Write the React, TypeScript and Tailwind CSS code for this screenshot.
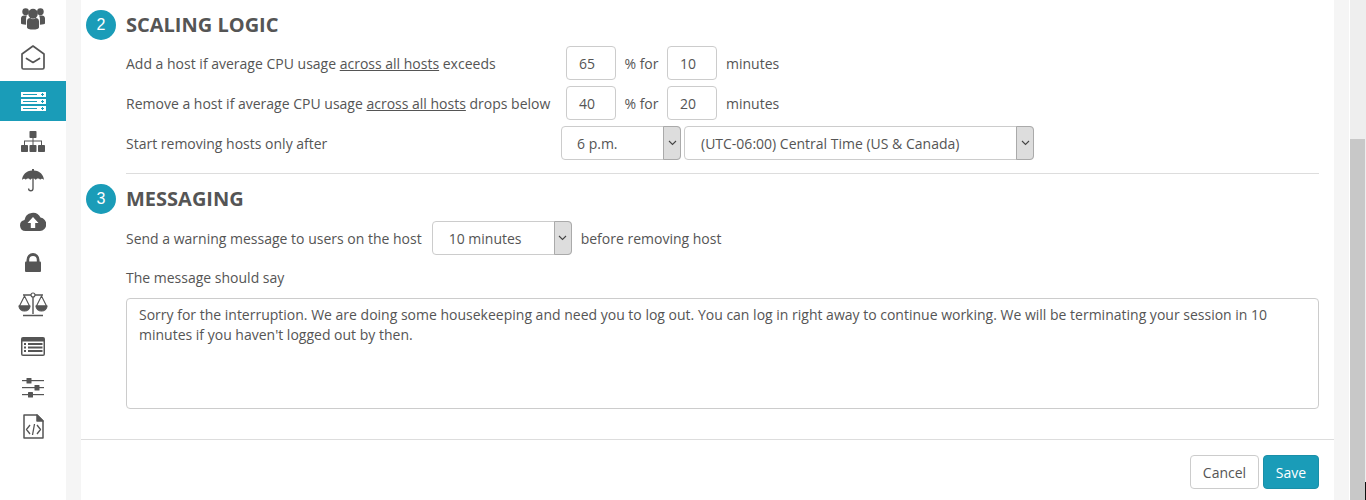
import React from "react";

const D = "#555555";

const Users = () => (
  <svg width="24" height="23" viewBox="0 0 26 24" preserveAspectRatio="none" fill={D}>
    <circle cx="5" cy="5" r="3.600" /><circle cx="21" cy="5" r="3.600" />
    <path d="M0 17v-5c0-2 1.500-3.200 3.500-3.200H6.500C5.800 10 5.500 11 5.500 12.500V18.500C2.500 18.500 0 18 0 17ZM26 17v-5c0-2-1.500-3.200-3.500-3.200H19.500C20.200 10 20.500 11 20.500 12.500V18.500C23.500 18.500 26 18 26 17Z" />
    <circle cx="13" cy="7" r="5.200" />
    <path d="M6.500 21v-6c0-2.500 1.800-3.500 3.500-3.500 1 .8 2 1.200 3 1.200s2-.4 3-1.200c1.700 0 3.500 1 3.500 3.500v6c0 1.500-3 2.500-6.500 2.500S6.500 22.500 6.500 21Z" />
  </svg>
);
const EnvelopeOpen = () => (
  <svg width="24" height="25" viewBox="0 0 24 25" fill="none" stroke={D} strokeWidth="1.700" strokeLinejoin="round" strokeLinecap="round">
    <path d="M1 9 12 1l11 8v13.500a1.500 1.500 0 0 1-1.500 1.500H2.500A1.500 1.500 0 0 1 1 22.500Z" />
    <path d="M5.500 13.500 12 17.500l6.500-4" />
  </svg>
);
const Server = () => (
  <svg width="25" height="19" viewBox="0 0 25 19">
    {[0, 7, 14].map((y) => (
      <g key={y}>
        <rect x="0" y={y} width="25" height="5" fill="#fff" />
        <rect x="2" y={y + 2} width="14" height="1" fill="#1a9cb8" />
        <rect x="20" y={y + 2} width="3" height="1" fill="#1a9cb8" />
        <rect x="21" y={y + 1} width="1" height="3" fill="#1a9cb8" />
      </g>
    ))}
  </svg>
);
const Sitemap = () => (
  <svg width="24" height="21" viewBox="0 0 24 21" fill={D}>
    <rect x="8.500" y="0" width="7" height="7" rx=".8" />
    <rect x="0" y="14" width="7" height="7" rx=".8" /><rect x="8.500" y="14" width="7" height="7" rx=".8" /><rect x="17" y="14" width="7" height="7" rx=".8" />
    <path d="M11.500 7h1v2.500h8.500V14h-1v-3.500h-7.500V14h-1v-3.500H4V14H3V9.500h8.500Z" />
  </svg>
);
const Umbrella = () => (
  <svg width="22" height="23" viewBox="0 0 23 23" preserveAspectRatio="none" fill={D}>
    <path d="M10.500 0h2v1.500c6 .3 10 4.200 10.500 9.500-1.200-1.500-3-1.800-4-.2-1-1.600-3.500-1.600-4.500.1-.8-1-2-1.400-3-1.400s-2.200.4-3 1.400c-1-1.700-3.500-1.700-4.500-.1-1-1.600-2.800-1.300-4 .2C.5 5.700 4.500 1.800 10.500 1.500Z" />
    <path d="M10.800 9h1.400v10.500a3 3 0 0 1-6 0h1.400a1.600 1.600 0 0 0 3.200 0Z" />
  </svg>
);
const Cloud = () => (
  <svg width="26" height="20" viewBox="0 0 26 20">
    <path d="M5.500 20a5.500 5.500 0 0 1-1-10.900A8.500 8.500 0 0 1 20.500 6.500 6.800 6.800 0 0 1 20 20Z" fill={D} />
    <path d="M13 6 18.500 12H15.200v5h-4.400v-5H7.500Z" fill="#fff" />
  </svg>
);
const Lock = () => (
  <svg width="16" height="19" viewBox="0 0 16 19" fill={D}>
    <path d="M1.500 9V7a6.500 7 0 0 1 13 0v2h-2.700V7a3.800 4 0 0 0-7.600 0v2Z" />
    <rect x="0" y="8.500" width="16" height="10.500" rx="1" />
  </svg>
);
const Scales = () => (
  <svg width="30" height="25" viewBox="0 0 30 25" fill="none" stroke={D} strokeWidth="1.100">
    <path d="M5 3h20M15 3v19M5 23.500h20" strokeWidth="1.400" />
    <circle cx="15" cy="3" r="2" fill="#fff" />
    <path d="M6.500 4 1.500 14h10ZM23.500 4l-5 10h10Z" />
    <path d="M1 14h11a5.500 5 0 0 1-11 0ZM18 14h11a5.500 5 0 0 1-11 0Z" fill={D} />
  </svg>
);
const ListAlt = () => (
  <svg width="24" height="19" viewBox="0 0 24 19">
    <rect x="0" y="0" width="24" height="19" rx="2" fill={D} />
    <rect x="1.500" y="4.500" width="21" height="13" fill="#fff" />
    {[6, 9.500, 13].map((y) => (
      <g key={y} fill={D}>
        <rect x="3" y={y} width="2" height="2" /><rect x="7" y={y} width="14.500" height="2" />
      </g>
    ))}
  </svg>
);
const Sliders = () => (
  <svg width="22" height="20" viewBox="0 0 22 20" fill={D}>
    <rect x="0" y="2" width="22" height="1.200" /><rect x="0" y="9" width="22" height="1.200" /><rect x="0" y="16" width="22" height="1.200" />
    <rect x="4.500" y="0" width="5" height="5.500" rx=".6" /><rect x="12.500" y="7" width="5" height="5.500" rx=".6" /><rect x="6" y="14" width="5" height="5.500" rx=".6" />
  </svg>
);
const FileCode = () => (
  <svg width="21" height="25" viewBox="0 0 21 25" fill="none" stroke={D} strokeWidth="1.500" strokeLinejoin="round">
    <path d="M1 1h13l6 6v17H1Z" />
    <path d="M14 1v6h6Z" fill={D} />
    <path d="M7 11 3.500 15.500 7 20M14 11l3.500 4.500L14 20M11.500 10 9.500 21" strokeWidth="1.300" />
  </svg>
);

const items: { icon: React.ReactNode; cls: string }[] = [
  { icon: <Users />, cls: "h-[37px]" },
  { icon: <EnvelopeOpen />, cls: "h-[44px] pb-[4px]" },
  { icon: <Server />, cls: "h-[40px] bg-[#1a9cb8]" },
  { icon: <Sitemap />, cls: "h-[40px]" },
  { icon: <Umbrella />, cls: "h-[39px]" },
  { icon: <Cloud />, cls: "h-[41px]" },
  { icon: <Lock />, cls: "h-[42px]" },
  { icon: <Scales />, cls: "h-[42px]" },
  { icon: <ListAlt />, cls: "h-[42px]" },
  { icon: <Sliders />, cls: "h-[41px]" },
  { icon: <FileCode />, cls: "h-[37px]" },
];

const Num = ({ v }: { v: string }) => (
  <div className="w-[50px] h-[34px] border border-[#ccc] rounded flex items-center pl-[12px] bg-white text-[14px] text-[#555]">{v}</div>
);

const Select = ({ v, w, pad }: { v: string; w: string; pad: string }) => (
  <div className={`${w} h-[34px] border border-[#ccc] rounded flex bg-white text-[14px] text-[#555]`}>
    <div className={`flex-1 flex items-center ${pad}`}>{v}</div>
    <div className="w-[18px] -my-px -mr-px bg-[#dddddd] border border-[#aaa] rounded-r flex items-center justify-center">
      <svg width="9" height="6" viewBox="0 0 9 6" fill="none" stroke="#444" strokeWidth="1.100"><path d="M1 1l3.500 3.500L8 1" /></svg>
    </div>
  </div>
);

const Step = ({ n, title }: { n: string; title: string }) => (
  <div className="flex items-center h-[30px]">
    <div className="w-[30px] h-[30px] rounded-full bg-[#1a9cb8] text-white flex items-center justify-center text-[16px] font-['Liberation_Sans',sans-serif]">{n}</div>
    <div className="ml-[10px] text-[20px] leading-[30px] font-bold text-[#555]">{title}</div>
  </div>
);

export default function App() {
  return (
    <div className="flex w-[1366px] h-[500px] overflow-hidden bg-white text-[14px] text-[#555] font-['Open_Sans',sans-serif]">
      <div className="w-[66px] shrink-0 flex flex-col">
        {items.map((it, i) => (
          <div key={i} className={`${it.cls} flex items-center justify-center`}>{it.icon}</div>
        ))}
      </div>
      <div className="flex-1 bg-[#f5f5f5] pl-[15px] pr-[15px]">
        <div className="bg-white h-full flex flex-col">
          <div className="pl-[5px] pr-[15px] pt-[10px] flex-1">
            <Step n="2" title="SCALING LOGIC" />
            <div className="pl-[40px] mt-[6px] flex flex-col gap-[6px]">
              <div className="flex items-center h-[34px]">
                <div className="w-[440px]">Add a host if average CPU usage <u>across all hosts</u> exceeds</div>
                <Num v="65" />
                <div className="w-[51px] text-center">% for</div>
                <Num v="10" />
                <div className="ml-[9px]">minutes</div>
              </div>
              <div className="flex items-center h-[34px]">
                <div className="w-[440px]">Remove a host if average CPU usage <u>across all hosts</u> drops below</div>
                <Num v="40" />
                <div className="w-[51px] text-center">% for</div>
                <Num v="20" />
                <div className="ml-[9px]">minutes</div>
              </div>
              <div className="flex items-center h-[34px]">
                <div className="w-[435px]">Start removing hosts only after</div>
                <Select v="6 p.m." w="w-[120px]" pad="pl-[15px]" />
                <div className="w-[3px]" />
                <Select v="(UTC-06:00) Central Time (US & Canada)" w="w-[350px]" pad="pl-[16px]" />
              </div>
            </div>
            <div className="ml-[40px] mt-[13px] border-t border-[#ddd]" />
            <div className="mt-[10px]"><Step n="3" title="MESSAGING" /></div>
            <div className="pl-[40px]">
              <div className="flex items-center h-[34px] mt-[7px]">
                <div>Send a warning message to users on the host</div>
                <div className="ml-[10px]"><Select v="10 minutes" w="w-[140px]" pad="pl-[16px]" /></div>
                <div className="ml-[9px]">before removing host</div>
              </div>
              <div className="mt-[13px] leading-[20px]">The message should say</div>
              <div className="mt-[10px] h-[111px] border border-[#ccc] rounded px-[12px] pt-[6px] leading-[20px]">
                Sorry for the interruption. We are doing some housekeeping and need you to log out. You can log in right away to continue working. We will be terminating your session in 10 minutes if you haven't logged out by then.
              </div>
            </div>
          </div>
          <div className="h-[61px] border-t border-[#ddd] flex items-start justify-end gap-[4px] pt-[15px] pr-[15px]">
            <div className="w-[69px] h-[34px] border border-[#ccc] rounded flex items-center justify-center">Cancel</div>
            <div className="w-[56px] h-[34px] rounded bg-[#1a9cb8] border border-[#1a8fa8] text-white flex items-center justify-center">Save</div>
          </div>
        </div>
      </div>
      <div className="w-[17px] shrink-0 bg-[#eeeeee] border-l border-white flex">
        <div className="w-[15px] flex flex-col">
          <div className="h-[139px]" />
          <div className="flex-1 bg-[#c8c8c8]" />
        </div>
        <div className="w-px flex flex-col justify-end">
          <div className="h-[18px] bg-[#111]" />
        </div>
      </div>
    </div>
  );
}
